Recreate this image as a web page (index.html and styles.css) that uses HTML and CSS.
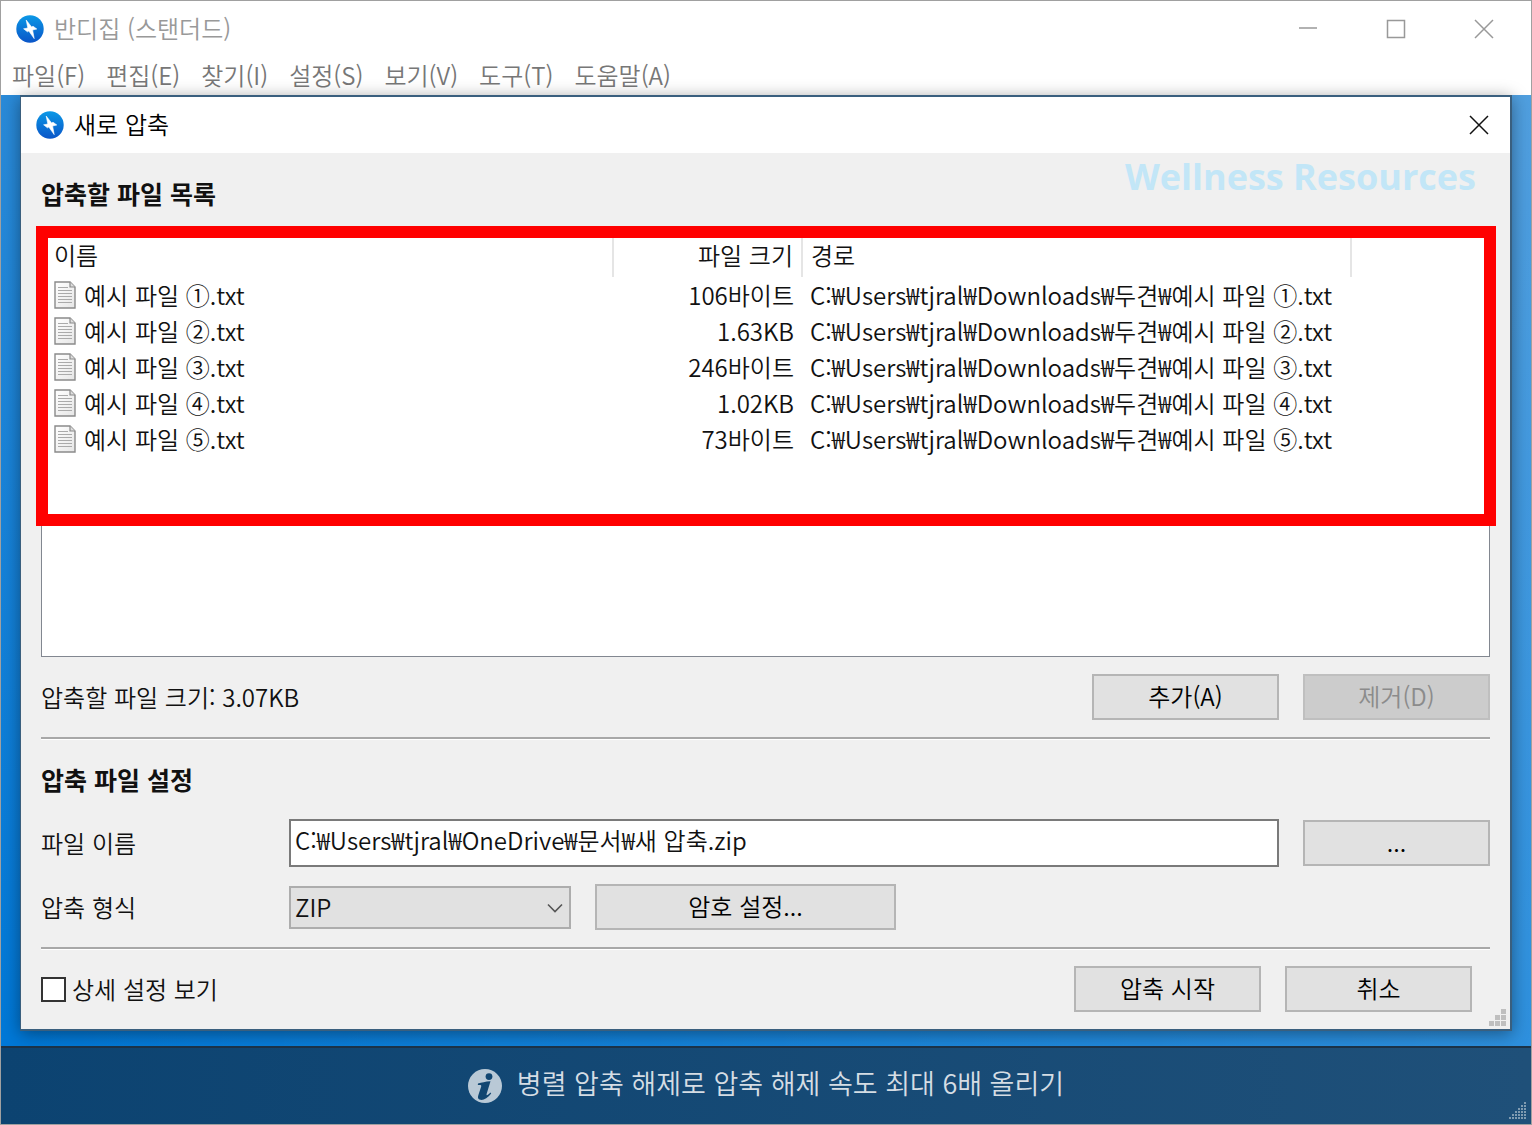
FILE: index.html
```html
<!DOCTYPE html>
<html lang="ko">
<head>
  <meta charset="UTF-8" />
  <title>반디집 (스탠더드)</title>
  <link rel="stylesheet" href="styles.css">
</head>

<body>
  <svg class="defs" width="0" height="0" aria-hidden="true">
    <defs>
      <linearGradient id="blue" x1="0" y1="0" x2="0" y2="1">
        <stop offset="0" stop-color="#0b98e6" />
        <stop offset="1" stop-color="#0a55c8" />
      </linearGradient>
      <linearGradient id="paper" x1="0" y1="0" x2="1" y2="1">
        <stop offset="0" stop-color="#ffffff" />
        <stop offset="1" stop-color="#e6e6e6" />
      </linearGradient>
    </defs>
    <symbol id="logo" viewBox="0 0 28 28">
      <circle cx="14" cy="14" r="13.7" fill="url(#blue)" />
      <path d="M10.2 5 L15.6 12 L17 11.2 L20.8 14 L16.6 15 L18.2 23.6 L12.8 16 L11.4 16.8 L7.6 13.8 L11.8 13 Z" fill="#fff" stroke="#fff" stroke-width="0.6" />
    </symbol>
    <symbol id="txt" viewBox="0 0 22 28">
      <path d="M1 1 H16 L21 6 V27 H1 Z" fill="url(#paper)" stroke="#8a8a8a" stroke-width="1.4" />
      <path d="M16 1 V6 H21" fill="#ddd" stroke="#8a8a8a" stroke-width="1.2" />
      <path d="M4 6.5 H14 M4 9.5 H18 M4 12.5 H18 M4 15.5 H18 M4 18.5 H18 M4 21.5 H18" stroke="#aaa" stroke-width="1.2" />
    </symbol>
  </svg>

  <div class="window">
    <header class="titlebar">
      <svg class="logo"><use href="#logo" /></svg>
      <span class="title">반디집 (스탠더드)</span>
      <button class="win-btn" aria-label="최소화"><svg viewBox="0 0 20 20"><path d="M1 9 H19" /></svg></button>
      <button class="win-btn" aria-label="최대화"><svg viewBox="0 0 20 20"><path d="M1.5 1.5 H18.5 V18.5 H1.5 Z" /></svg></button>
      <button class="win-btn" aria-label="닫기"><svg viewBox="0 0 20 20"><path d="M1 1 L19 19 M19 1 L1 19" /></svg></button>
    </header>

    <nav class="menu">
      <a href="#">파일(F)</a>
      <a href="#">편집(E)</a>
      <a href="#">찾기(I)</a>
      <a href="#">설정(S)</a>
      <a href="#">보기(V)</a>
      <a href="#">도구(T)</a>
      <a href="#">도움말(A)</a>
    </nav>

    <main class="workspace">
      <form class="dialog">
        <div class="dialog-title">
          <svg class="logo"><use href="#logo" /></svg>
          <span class="title">새로 압축</span>
          <button type="button" class="win-btn" aria-label="닫기"><svg viewBox="0 0 20 20"><path d="M1 1 L19 19 M19 1 L1 19" /></svg></button>
        </div>

        <div class="dialog-body">
          <div class="watermark">Wellness Resources</div>
          <h2>압축할 파일 목록</h2>

          <div class="list">
            <table>
              <thead>
                <tr><th class="name">이름</th><th class="size">파일 크기</th><th class="path">경로</th><th></th></tr>
              </thead>
              <tbody>
                <tr><td><div class="file"><svg class="txt"><use href="#txt" /></svg>예시 파일 ①.txt</div></td><td class="size">106바이트</td><td colspan="2">C:₩Users₩tjral₩Downloads₩두견₩예시 파일 ①.txt</td></tr>
                <tr><td><div class="file"><svg class="txt"><use href="#txt" /></svg>예시 파일 ②.txt</div></td><td class="size">1.63KB</td><td colspan="2">C:₩Users₩tjral₩Downloads₩두견₩예시 파일 ②.txt</td></tr>
                <tr><td><div class="file"><svg class="txt"><use href="#txt" /></svg>예시 파일 ③.txt</div></td><td class="size">246바이트</td><td colspan="2">C:₩Users₩tjral₩Downloads₩두견₩예시 파일 ③.txt</td></tr>
                <tr><td><div class="file"><svg class="txt"><use href="#txt" /></svg>예시 파일 ④.txt</div></td><td class="size">1.02KB</td><td colspan="2">C:₩Users₩tjral₩Downloads₩두견₩예시 파일 ④.txt</td></tr>
                <tr><td><div class="file"><svg class="txt"><use href="#txt" /></svg>예시 파일 ⑤.txt</div></td><td class="size">73바이트</td><td colspan="2">C:₩Users₩tjral₩Downloads₩두견₩예시 파일 ⑤.txt</td></tr>
              </tbody>
            </table>
            <div class="highlight"></div>
          </div>

          <div class="row total">
            <span class="grow">압축할 파일 크기: 3.07KB</span>
            <button type="button" class="btn">추가(A)</button>
            <button type="button" class="btn" disabled>제거(D)</button>
          </div>

          <hr>

          <h2 class="settings">압축 파일 설정</h2>

          <div class="row field">
            <label for="filename">파일 이름</label>
            <input type="text" id="filename" class="grow" value="C:₩Users₩tjral₩OneDrive₩문서₩새 압축.zip">
            <button type="button" class="btn">...</button>
          </div>

          <div class="row field">
            <label for="format">압축 형식</label>
            <div class="select">
              <select id="format"><option>ZIP</option></select>
              <svg viewBox="0 0 16 10"><path d="M1 1.5 L8 8.5 L15 1.5" /></svg>
            </div>
            <button type="button" class="btn wide">암호 설정...</button>
          </div>

          <hr>

          <div class="row actions">
            <div class="grow check">
              <input type="checkbox" id="detail">
              <label for="detail">상세 설정 보기</label>
            </div>
            <button type="submit" class="btn">압축 시작</button>
            <button type="button" class="btn">취소</button>
          </div>

          <svg class="grip" viewBox="0 0 17 17"><path d="M12 0h5v5h-5z M6 6h5v5h-5z M12 6h5v5h-5z M0 12h5v5h-5z M6 12h5v5h-5z M12 12h5v5h-5z" /></svg>
        </div>
      </form>
    </main>

    <footer class="banner">
      <svg class="info" viewBox="0 0 34 34">
        <circle cx="17" cy="17" r="17" fill="#b9c9d6" />
        <circle cx="21" cy="7.6" r="3.4" fill="#114671" />
        <path d="M10 14.5 C14 13.4 17 12.6 22.5 12.2 L18.6 25 C18.2 27 19.4 26.6 22.4 23.6 L23.2 24.6 C19.6 29.4 15.4 31.4 12.4 30.8 C9.4 30.2 9.8 27.8 10.4 26 L13.2 17.4 C13.6 15.8 12.4 15.8 9.8 16 Z" fill="#114671" />
      </svg>
      <span>병렬 압축 해제로 압축 해제 속도 최대 6배 올리기</span>
      <svg class="grip" viewBox="0 0 18 18"><path d="M15 0h2v2h-2z M12 3h2v2h-2z M15 3h2v2h-2z M12 6h2v2h-2z M9 6h2v2h-2z M15 6h2v2h-2z M6 9h2v2h-2z M9 9h2v2h-2z M12 9h2v2h-2z M15 9h2v2h-2z M3 12h2v2h-2z M6 12h2v2h-2z M9 12h2v2h-2z M12 12h2v2h-2z M15 12h2v2h-2z M0 15h2v2h-2z M3 15h2v2h-2z M6 15h2v2h-2z M9 15h2v2h-2z M12 15h2v2h-2z M15 15h2v2h-2z" /></svg>
    </footer>
  </div>
</body>
</html>
```
FILE: styles.css
```css
* {
  box-sizing: border-box;
}

body {
  margin: 0;
  font-family: "Noto Sans CJK KR", sans-serif;
  font-weight: 350;
  font-size: 24px;
  line-height: 36px;
  color: #111;
}

button, input, select {
  font: inherit;
  color: inherit;
}

.defs {
  position: absolute;
}

/* fenêtre principale */
.window {
  display: flex;
  flex-direction: column;
  min-height: 100vh;
  border: 1px solid #a0a0a0;
  background: #fff;
}

.titlebar, .dialog-title {
  display: flex;
  align-items: center;
  height: 56px;
  padding-left: 15px;
}

.logo {
  width: 28px;
  height: 28px;
}

.title {
  flex: 1;
  padding: 0 0 2px 10px;
}

.titlebar {
  padding-right: 3px;
  color: #999;
}

.win-btn {
  width: 88px;
  height: 56px;
  padding: 0;
  border: none;
  background: none;
}

.win-btn svg {
  display: block;
  width: 20px;
  height: 20px;
  margin: auto;
  fill: none;
  stroke: #999;
  stroke-width: 1.5;
}

.menu {
  display: flex;
  gap: 21px;
  height: 38px;
  padding-left: 11px;
}

.menu a {
  color: #777;
  text-decoration: none;
}

.workspace {
  flex: 1;
  display: flex;
  padding: 0 19px 15px;
  background: linear-gradient(to right, rgba(255, 255, 255, 0), rgba(255, 255, 255, 0.18)), linear-gradient(#2a8ad8, #0078d7);
}

/* boîte de dialogue */
.dialog {
  flex: 1;
  display: flex;
  flex-direction: column;
  border: 2px solid #3a5f7e;
  border-left-width: 1px;
  background: #f0f0f0;
  box-shadow: 0 3px 16px rgba(0, 0, 0, 0.4);
}

.dialog-title {
  background: #fff;
  color: #000;
}

.dialog-title .win-btn {
  width: 62px;
}

.dialog-title .win-btn svg {
  stroke: #111;
}

.dialog-body {
  position: relative;
  flex: 1;
  display: flex;
  flex-direction: column;
  padding: 22px 20px 17px;
}

.watermark {
  position: absolute;
  top: 0;
  right: 34px;
  font-family: "Open Sans", sans-serif;
  font-weight: 700;
  font-size: 36px;
  line-height: 48px;
  color: #c2e6f7;
}

h2 {
  margin: 0 0 20px;
  font-size: 25px;
  font-weight: 700;
}

.list {
  position: relative;
  flex: 1;
  padding: 6px 5px 0;
  border: 1px solid #828790;
  background: #fff;
}

/* cadre rouge autour des fichiers */
.highlight {
  position: absolute;
  top: -6px;
  left: -6px;
  right: -7px;
  height: 300px;
  border: 12px solid #f00;
}

table {
  width: 100%;
  table-layout: fixed;
  border-collapse: collapse;
}

th, td {
  height: 36px;
  padding: 0 8px;
  font-weight: 350;
  text-align: left;
  white-space: nowrap;
}

td {
  line-height: 28px;
}

th {
  height: 39px;
  line-height: 34px;
  vertical-align: top;
  border-right: 2px solid #e5e5e5;
}

th:last-child {
  border: none;
}

th.name { width: 566px; }
th.size { width: 189px; }
th.path { width: 549px; }

th.name, td:first-child {
  padding-left: 7px;
}

.size {
  text-align: right;
}

.file {
  display: flex;
  align-items: center;
  gap: 8px;
}

.txt {
  width: 22px;
  height: 28px;
}

.row {
  display: flex;
  align-items: center;
  gap: 24px;
}

.grow {
  flex: 1;
}

.total {
  padding: 17px 0;
}

hr {
  width: 100%;
  height: 3px;
  margin: 0;
  border: none;
  border-top: 2px solid #a8a8a8;
  background: #fff;
}

.settings {
  margin: 21px 0 22px;
}

.field {
  height: 48px;
  margin-bottom: 16px;
}

.field label {
  width: 224px;
}

.btn {
  width: 187px;
  height: 46px;
  padding: 0 0 2px;
  border: 2px solid #b5b5b5;
  background: #e1e1e1;
  color: #000;
}

.btn:disabled {
  border-color: #bfbfbf;
  background: #ccc;
  color: #8b8b8b;
}

.btn.wide {
  width: 301px;
}

input[type=text] {
  height: 48px;
  padding: 0 4px 8px;
  border: 2px solid #7a7a7a;
  border-radius: 0;
  background: #fff;
}

.select {
  position: relative;
  width: 282px;
}

select {
  display: block;
  width: 100%;
  height: 43px;
  padding: 0 4px;
  border: 2px solid #adadad;
  border-radius: 0;
  background: #e1e1e1;
  appearance: none;
}

.select svg {
  position: absolute;
  top: 17px;
  right: 8px;
  width: 16px;
  height: 10px;
  fill: none;
  stroke: #555;
  stroke-width: 1.6;
}

.actions {
  padding: 16px 18px 0 0;
}

.check {
  display: flex;
  align-items: center;
  gap: 6px;
}

input[type=checkbox] {
  width: 25px;
  height: 25px;
  margin: 0;
  border: 2px solid #333;
  background: #fff;
  appearance: none;
}

.dialog .grip {
  position: absolute;
  right: 4px;
  bottom: 3px;
  width: 17px;
  height: 17px;
  fill: #bfbfbf;
}

/* bandeau du bas */
.banner {
  position: relative;
  display: flex;
  align-items: center;
  justify-content: center;
  gap: 15px;
  height: 78px;
  border-top: 2px solid #1b3247;
  background: linear-gradient(to right, #0c4371, #1f5079);
  color: #d5dde4;
  font-size: 27px;
}

.banner span {
  padding-bottom: 6px;
}

.info {
  width: 34px;
  height: 34px;
}

.banner .grip {
  position: absolute;
  right: 4px;
  bottom: 4px;
  width: 18px;
  height: 18px;
  fill: #7f9bb1;
}
```
